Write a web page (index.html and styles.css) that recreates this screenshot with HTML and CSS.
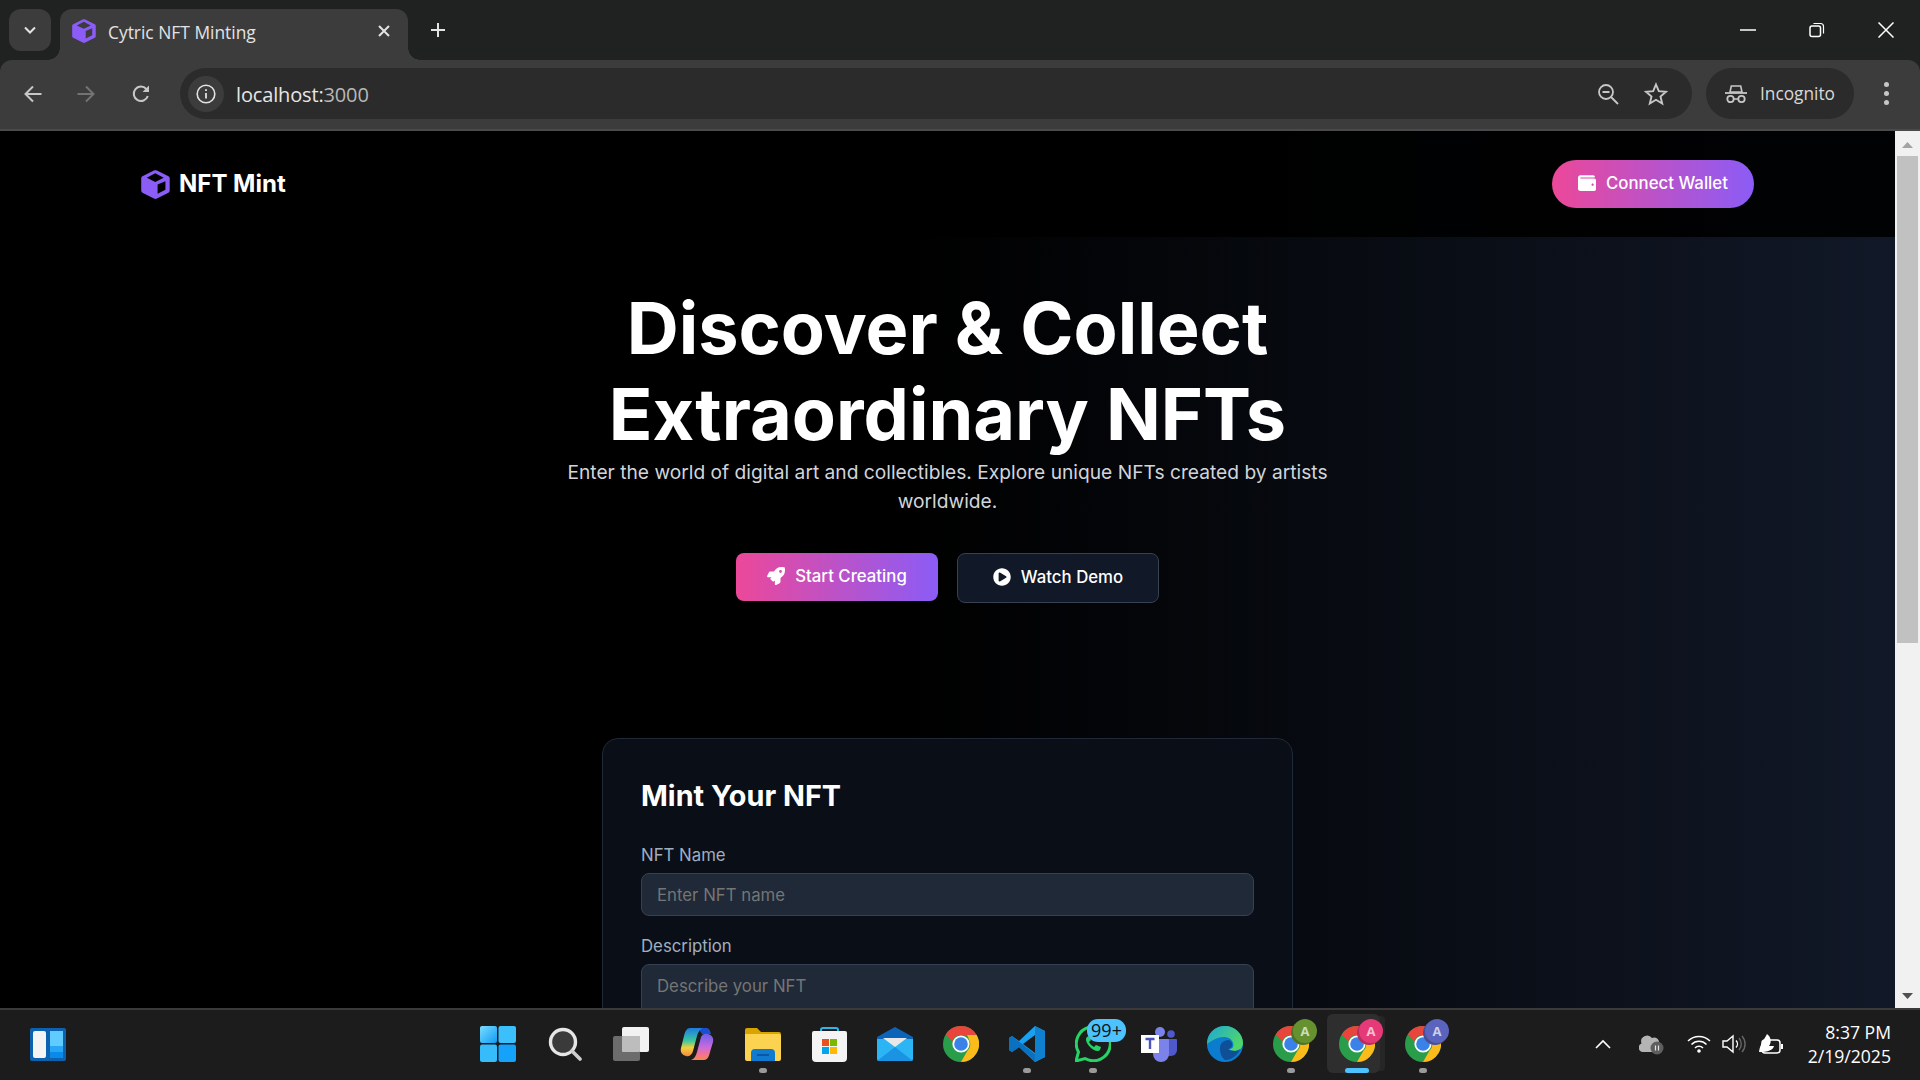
FILE: index.html
```html
<!DOCTYPE html>
<html lang="en">
<head>
<meta charset="utf-8">
<title>Cytric NFT Minting</title>
<link rel="stylesheet" href="styles.css">
</head>
<body>
<svg class="defs" aria-hidden="true">
  <defs>
    <symbol id="cube" viewBox="0 0 28.5 28.5"><path fill="#8b5cf6" fill-rule="evenodd" d="M14.2.3a2 2 0 0 1 1.500.3L27 6.200a2 2 0 0 1 1.200 1.800v12.500a2 2 0 0 1-1.200 1.800L15.700 28a3 3 0 0 1-3 0L1.400 22.300a2 2 0 0 1-1.200-1.800V8a2 2 0 0 1 1.200-1.800L12.700.6a3 3 0 0 1 1.500-.3zM5.700 7.700 14 11.700l8.300-4L14 3.300zM16.300 14.300v9l7.700-4V11z"/></symbol>
    <symbol id="chrome" viewBox="0 0 36 36">
      <circle cx="18" cy="18" r="18" fill="#2a9d4a"/>
      <path fill="#e8453c" d="M18 0a18 18 0 0 1 15.6 9H18a9 9 0 0 0-8.6 6.4L2.9 8.2A18 18 0 0 1 18 0z"/>
      <path fill="#fbbc1b" d="M33.6 9a18 18 0 0 1-15.6 27l6.6-11.6A9 9 0 0 0 25.8 13.5 9 9 0 0 0 24 9z"/>
      <circle cx="18" cy="18" r="8.6" fill="#fff"/>
      <circle cx="18" cy="18" r="6.8" fill="#3b82e8"/>
    </symbol>
  </defs>
</svg>

<header class="browser">
  <div class="tabstrip">
    <div class="tabsearch">
      <svg width="16" height="16" viewBox="0 0 16 16"><path d="M3 5.500 8 10.500l5-5" fill="none" stroke="#e3e3e3" stroke-width="2"/></svg>
    </div>
    <div class="tab">
      <svg class="tab-icon" width="24" height="24"><use href="#cube"/></svg>
      <span class="tab-title">Cytric NFT Minting</span>
      <svg class="tab-close" width="14" height="14" viewBox="0 0 14 14"><path d="M2 2l10 10M12 2 2 12" stroke="#e3e3e3" stroke-width="2"/></svg>
    </div>
    <svg class="newtab" width="16" height="16" viewBox="0 0 16 16"><path d="M8 1v14M1 8h14" stroke="#e3e3e3" stroke-width="2"/></svg>
    <div class="winctl">
      <svg width="16" height="16" viewBox="0 0 16 16"><path d="M0 8h16" stroke="#fff" stroke-width="1.500"/></svg>
      <svg width="16" height="16" viewBox="0 0 16 16"><rect x="1" y="4" width="10.500" height="10.500" rx="2" fill="none" stroke="#fff" stroke-width="1.500"/><path d="M4.500 1.500h7a3 3 0 0 1 3 3v7" fill="none" stroke="#fff" stroke-width="1.200"/></svg>
      <svg width="16" height="16" viewBox="0 0 16 16"><path d="M.5.5l15 15M15.500.5l-15 15" stroke="#fff" stroke-width="1.500"/></svg>
    </div>
  </div>
  <div class="toolbar">
    <svg class="tool-back" width="20" height="20" viewBox="0 0 20 20"><path d="M18.500 10H2.500M10 2.500 2.500 10l7.500 7.500" fill="none" stroke="#c7c7c7" stroke-width="2"/></svg>
    <svg class="tool-fwd" width="20" height="20" viewBox="0 0 20 20"><path d="M1.500 10h16M10 2.500l7.500 7.500-7.500 7.500" fill="none" stroke="#737373" stroke-width="2"/></svg>
    <svg class="tool-reload" width="20" height="20" viewBox="0 0 20 20"><path d="M16.800 12a7.200 7.200 0 1 1-1.500-7L17 7" fill="none" stroke="#c7c7c7" stroke-width="2"/><path d="M18 1.500V8h-6.500z" fill="#c7c7c7"/></svg>
    <div class="omnibox">
      <div class="siteinfo">
        <svg width="20" height="20" viewBox="0 0 20 20"><circle cx="10" cy="10" r="8.800" fill="none" stroke="#e3e3e3" stroke-width="1.600"/><path d="M10 9v5.500M10 5.300v1.800" stroke="#e3e3e3" stroke-width="1.800"/></svg>
      </div>
      <span class="url">localhost:<span class="url-dim">3000</span></span>
      <svg class="omni-zoom" width="22" height="22" viewBox="0 0 22 22"><circle cx="9" cy="9" r="7" fill="none" stroke="#c7c7c7" stroke-width="1.800"/><path d="M5.500 9h7M14 14l7 7" stroke="#c7c7c7" stroke-width="1.800"/></svg>
      <svg class="omni-star" width="24" height="24" viewBox="0 0 24 24"><path d="M12 2.500l2.800 6.700 7.200.6-5.500 4.700 1.700 7-6.200-3.700-6.200 3.700 1.700-7L2 9.800l7.200-.6z" fill="none" stroke="#c7c7c7" stroke-width="1.900"/></svg>
    </div>
    <div class="incognito">
      <svg width="22" height="20" viewBox="0 0 22 20"><path d="M5 8l1.300-6h9.400L17 8z" fill="none" stroke="#c7c7c7" stroke-width="1.600"/><path d="M0 9h22" stroke="#c7c7c7" stroke-width="1.800"/><circle cx="5.500" cy="15" r="3.200" fill="none" stroke="#c7c7c7" stroke-width="1.800"/><circle cx="16.500" cy="15" r="3.200" fill="none" stroke="#c7c7c7" stroke-width="1.800"/><path d="M8.700 15h4.600" stroke="#c7c7c7" stroke-width="1.600"/></svg>
      <span>Incognito</span>
    </div>
    <div class="kebab"><i></i><i></i><i></i></div>
  </div>
</header>

<div class="viewport">
  <main class="page">
    <nav class="nav">
      <div class="brand">
        <svg width="29" height="29"><use href="#cube"/></svg>
        <span class="brand-name">NFT Mint</span>
      </div>
      <button class="connect" type="button">
        <svg width="18" height="18" viewBox="0 0 512 512"><path fill="#fff" d="M461.2 128H80c-8.840 0-16-7.160-16-16s7.160-16 16-16h384c8.840 0 16-7.160 16-16 0-26.510-21.490-48-48-48H64C28.650 32 0 60.650 0 96v320c0 35.350 28.650 64 64 64h397.200c28.020 0 50.800-21.530 50.800-48V176c0-26.470-22.780-48-50.800-48zM416 336c-17.670 0-32-14.330-32-32s14.330-32 32-32 32 14.330 32 32-14.330 32-32 32z"/></svg>
        Connect Wallet
      </button>
    </nav>
    <section class="hero">
      <h1>Discover &amp; Collect<br>Extraordinary NFTs</h1>
      <p class="lead">Enter the world of digital art and collectibles. Explore unique NFTs created by artists worldwide.</p>
      <div class="cta">
        <button class="btn btn-primary" type="button">
          <svg width="18" height="18" viewBox="0 0 512 512"><path fill="#fff" d="M505.12 19.09c-1.190-5.530-6.660-11-12.210-12.190C460.720 0 435.510 0 410.410 0 307.180 0 245.270 55.200 199.050 128H94.840c-16.350.020-35.560 11.880-42.890 26.480L2.520 253.300A28.400 28.400 0 0 0 0 264a24 24 0 0 0 24.010 24h103.810l-22.480 22.470c-11.360 11.360-13 32.260 0 45.250l50.910 50.910c11.160 11.190 32.160 13.160 45.280 0l22.470-22.470V488a24 24 0 0 0 24.010 24 28.560 28.560 0 0 0 10.710-2.520l98.730-49.390c14.630-7.300 26.510-26.500 26.510-42.860V312.800c72.600-46.310 128.030-108.410 128.030-211.100.020-25.200.020-50.400-6.930-82.610zM384.040 168a40 40 0 1 1 40.010-40 40.020 40.020 0 0 1-40.010 40z"/></svg>
          Start Creating
        </button>
        <button class="btn btn-secondary" type="button">
          <svg width="18" height="18" viewBox="0 0 512 512"><path fill="#fff" d="M256 8C119 8 8 119 8 256s111 248 248 248 248-111 248-248S393 8 256 8zm115.700 272l-176 101c-15.800 8.800-35.700-2.500-35.700-21V152c0-18.400 19.800-29.800 35.700-21l176 107c16.400 9.200 16.400 32.900 0 42z"/></svg>
          Watch Demo
        </button>
      </div>
    </section>
    <section class="card">
      <h2>Mint Your NFT</h2>
      <label class="field-label" for="nft-name">NFT Name</label>
      <input class="field" id="nft-name" type="text" placeholder="Enter NFT name">
      <label class="field-label" for="nft-desc">Description</label>
      <textarea class="field field-area" id="nft-desc" placeholder="Describe your NFT"></textarea>
    </section>
  </main>
  <div class="scrollbar">
    <svg class="sb-arrow" width="25" height="24" viewBox="0 0 25 24"><path d="M7 17l5.500-6 5.500 6z" fill="#a3a3a3"/></svg>
    <div class="sb-track"><div class="sb-thumb"></div></div>
    <svg class="sb-arrow" width="25" height="24" viewBox="0 0 25 24"><path d="M7 9l5.500 6L18 9z" fill="#505050"/></svg>
  </div>
</div>

<footer class="taskbar">
  <div class="tb-left">
    <svg width="36" height="33" viewBox="0 0 36 33"><rect width="36" height="33" rx="2" fill="#0d62b0"/><rect x="3" y="3" width="13" height="27" rx="2" fill="#f4f4f4"/><rect x="20" y="3" width="13" height="15" fill="#5fcbff"/><rect x="20" y="18" width="13" height="6" fill="#26a6f5"/><rect x="20" y="24" width="13" height="6" fill="#0a8bea"/></svg>
  </div>
  <div class="tb-center">
    <div class="tb-item tb-start">
      <svg width="36" height="36" viewBox="0 0 36 36"><defs><linearGradient id="w1" x1="0" y1="0" x2="1" y2="1"><stop offset="0" stop-color="#7bdcff"/><stop offset="1" stop-color="#0f9cf5"/></linearGradient></defs><rect x="0" y="0" width="17" height="17" rx="2" fill="url(#w1)"/><rect x="18.500" y="0" width="17.500" height="17" rx="2" fill="#3cc0fb"/><rect x="0" y="18.500" width="17" height="17.500" rx="2" fill="#37bcfb"/><rect x="18.500" y="18.500" width="17.500" height="17.500" rx="2" fill="#14a2fa"/></svg>
    </div>
    <div class="tb-item">
      <svg width="34" height="34" viewBox="0 0 34 34"><circle cx="15" cy="15" r="12.500" fill="#3a3a3a" stroke="#e6e6e6" stroke-width="3.400"/><path d="M24 24l8 8" stroke="#cfcfcf" stroke-width="3.600" stroke-linecap="round"/></svg>
    </div>
    <div class="tb-item">
      <svg width="36" height="34" viewBox="0 0 36 34"><rect x="9" y="0" width="27" height="25" rx="2" fill="#f2f2f2"/><rect x="0" y="9" width="27" height="25" rx="2" fill="#6c6c6c"/><rect x="9" y="9" width="18" height="16" rx="1" fill="#bdbdbd"/></svg>
    </div>
    <div class="tb-item">
      <svg width="34" height="34" viewBox="0 0 34 34"><defs><linearGradient id="c1" x1="0" y1="0" x2="0" y2="1"><stop offset="0" stop-color="#1e7ae0"/><stop offset=".45" stop-color="#3cc6a0"/><stop offset=".7" stop-color="#f4d03c"/><stop offset="1" stop-color="#f08a40"/></linearGradient><linearGradient id="c2" x1="0" y1="0" x2="0" y2="1"><stop offset="0" stop-color="#6a5fe8"/><stop offset=".5" stop-color="#c86adf"/><stop offset=".8" stop-color="#f4748c"/><stop offset="1" stop-color="#f48a4c"/></linearGradient></defs><path d="M18 1h8c3 0 4 2 5 6H22z" fill="#1a4fd0"/><path d="M10 1h13c-3 1-5 4-6 8l-4 15c-1 4-4 6-7 5-4-1-6-4-5-8L4 9c1-5 3-8 6-8z" fill="url(#c1)"/><path d="M24 33H11c3-1 5-4 6-8l4-15c1-3 4-4 7-3 4 1 6 4 5 8l-3 10c-1 5-3 8-6 8z" fill="url(#c2)"/><path d="M20 13h-2l-4 11h2z" fill="#1c1c1c"/></svg>
    </div>
    <div class="tb-item tb-running">
      <svg width="36" height="33" viewBox="0 0 36 33"><path d="M0 2a2 2 0 0 1 2-2h10l4 4h18a2 2 0 0 1 2 2v5H0z" fill="#d9a400"/><path d="M0 6h34a2 2 0 0 1 2 2v23a2 2 0 0 1-2 2H2a2 2 0 0 1-2-2z" fill="#fbd350"/><path d="M6 33v-8a4 4 0 0 1 4-4h16a4 4 0 0 1 4 4v8z" fill="#0f7ad0"/><path d="M12 27h12" stroke="#0a4f96" stroke-width="1.600"/></svg>
    </div>
    <div class="tb-item">
      <svg width="35" height="35" viewBox="0 0 35 35"><path d="M9 4V3a2 2 0 0 1 2-2h13a2 2 0 0 1 2 2v1" fill="none" stroke="#2fb4ea" stroke-width="2"/><path d="M0 6a2 2 0 0 1 2-2h31a2 2 0 0 1 2 2v25a4 4 0 0 1-4 4H4a4 4 0 0 1-4-4z" fill="#f4f4f4"/><rect x="10" y="12" width="7" height="7" fill="#e8501f"/><rect x="18" y="12" width="7" height="7" fill="#7bb800"/><rect x="10" y="20" width="7" height="7" fill="#00a4ef"/><rect x="18" y="20" width="7" height="7" fill="#ffb900"/></svg>
    </div>
    <div class="tb-item">
      <svg width="36" height="34" viewBox="0 0 36 34"><path d="M0 10 18 0l18 10v3H0z" fill="#0c64b8"/><path d="M0 12h36v20a2 2 0 0 1-2 2H2a2 2 0 0 1-2-2z" fill="#2cb5f5"/><path d="M6 11h24l-12 9z" fill="#e8e8e8"/><path d="M0 34l18-14 18 14z" fill="#1a93e2"/></svg>
    </div>
    <div class="tb-item"><svg width="36" height="36"><use href="#chrome"/></svg></div>
    <div class="tb-item tb-running">
      <svg width="36" height="36" viewBox="0 0 36 36"><path d="M26 0l10 5v26l-10 5-16-15-7 5-3-2V12l3-2 7 5z" fill="#1aa0f0"/><path d="M26 0v36l10-5V5z" fill="#0f80d0"/><path d="M26 9 14 18l12 9z" fill="#1c1c1c"/><path d="M0 12l3-2 23 18v8l-16-15-7 5-3-2z" fill="#0a70c0"/></svg>
    </div>
    <div class="tb-item tb-running">
      <svg width="36" height="36" viewBox="0 0 36 36"><path d="M1 35l2.500-9A17 17 0 1 1 10 32.500z" fill="none" stroke="#25d366" stroke-width="3"/><path d="M12 11c-2 2-1 6 3 10s8 5 10 3l1-3-5-2-2 2c-2-1-4-3-5-5l2-2-2-4z" fill="#25d366"/></svg>
      <span class="badge-count">99+</span>
    </div>
    <div class="tb-item">
      <svg width="36" height="36" viewBox="0 0 36 36"><circle cx="19" cy="6" r="5" fill="#7b83eb"/><circle cx="30" cy="8" r="3.800" fill="#5059c9"/><path d="M24 13h11a1 1 0 0 1 1 1v10a6 6 0 0 1-6 6h-6z" fill="#5059c9"/><path d="M10 13h17a1 1 0 0 1 1 1v14a8 8 0 0 1-16 0z" fill="#7b83eb"/><rect x="0" y="9" width="18" height="18" fill="#fff"/><path d="M4.500 13h9M9 13v10" stroke="#4b53bc" stroke-width="2.400"/></svg>
    </div>
    <div class="tb-item">
      <svg width="36" height="36" viewBox="0 0 36 36"><defs><linearGradient id="e1" x1="0" y1="0" x2="1" y2=".5"><stop offset="0" stop-color="#1ca7d8"/><stop offset="1" stop-color="#4fd66a"/></linearGradient></defs><circle cx="18" cy="18" r="18" fill="#0c7ccf"/><path d="M0 18C0 7 8 0 18 0c10 0 18 8 18 17 0 5-4 8-8 8-3 0-5-1-6-2 4 0 5-3 4-6-1-4-5-6-9-6-8 0-14 5-17 7z" fill="url(#e1)"/><path d="M13 22c0-5 4-8 9-8 2 1 4 3 3 6-1 2-2 3-4 3 1 1 4 2 7 2 1 0 4-1 5-2-2 6-8 11-15 11-4-3-5-8-5-12z" fill="#0f4f96"/></svg>
    </div>
    <div class="tb-item tb-running">
      <svg width="36" height="36"><use href="#chrome"/></svg>
      <span class="badge-profile badge-green">A</span>
    </div>
    <div class="tb-item tb-active">
      <div class="tb-active-bg"></div>
      <svg width="36" height="36"><use href="#chrome"/></svg>
      <span class="badge-profile badge-pink">A</span>
    </div>
    <div class="tb-item tb-running">
      <svg width="36" height="36"><use href="#chrome"/></svg>
      <span class="badge-profile badge-indigo">A</span>
    </div>
  </div>
  <div class="tray">
    <svg class="tray-chev" width="16" height="10" viewBox="0 0 16 10"><path d="M1 9l7-7 7 7" fill="none" stroke="#fff" stroke-width="1.600"/></svg>
    <svg class="tray-cloud" width="26" height="22" viewBox="0 0 26 22"><path d="M3 19a4.500 4.500 0 0 1-.5-8.500A6 6 0 0 1 13 5a5 5 0 0 1 7 5.500 4.500 4.500 0 0 1-1 8.500z" fill="#b4b4b4"/><circle cx="18" cy="15" r="6.500" fill="#5e5e5e"/><path d="M16.500 12.500v5M19.500 12.500v5" stroke="#e5e5e5" stroke-width="1.200"/></svg>
    <svg class="tray-wifi" width="24" height="18" viewBox="0 0 24 18"><path d="M1 6a15.500 15.500 0 0 1 22 0M4.500 9.500a10.500 10.500 0 0 1 15 0M8 13a5.500 5.500 0 0 1 8 0" fill="none" stroke="#fff" stroke-width="1.500"/><circle cx="12" cy="16" r="1.800" fill="#fff"/></svg>
    <svg class="tray-vol" width="24" height="20" viewBox="0 0 24 20"><path d="M1 7v6h4l6 5V2L5 7z" fill="none" stroke="#fff" stroke-width="1.400"/><path d="M14 6.500a5 5 0 0 1 0 7" fill="none" stroke="#fff" stroke-width="1.400"/><path d="M17 4a9 9 0 0 1 0 12M20 2a12 12 0 0 1 0 16" fill="none" stroke="#666" stroke-width="1.400"/></svg>
    <svg class="tray-batt" width="26" height="22" viewBox="0 0 26 22"><rect x="4" y="7" width="18" height="13" rx="3" fill="none" stroke="#fff" stroke-width="1.500"/><path d="M24 11v5" stroke="#fff" stroke-width="2"/><path d="M1 19C2 11 6 7 9 1c4 3 5 8 2 12l5 0c-1 4-6 6-15 6z" fill="#fff"/></svg>
    <div class="clock"><span>8:37 PM</span><span>2/19/2025</span></div>
  </div>
</footer>
</body>
</html>
```
FILE: styles.css
```css
* { box-sizing: border-box; }
html, body { margin: 0; padding: 0; height: 100%; overflow: hidden; background: #000; }
body { display: flex; flex-direction: column; width: 1920px; height: 1080px; font-family: Inter, "Liberation Sans", sans-serif; color: #fff; }
.defs { width: 0; height: 0; position: absolute; }
svg { display: block; flex: none; }

/* browser chrome */
.browser { flex: none; height: 131px; background: #202222; display: flex; flex-direction: column; font-family: "Open Sans", "Noto Sans", sans-serif; }
.tabstrip { height: 60px; display: flex; align-items: flex-start; padding: 9px 0 0 9px; position: relative; }
.tabsearch { width: 42px; height: 42px; border-radius: 12px; background: #3c3c3c; display: flex; align-items: center; justify-content: center; }
.tab { margin-left: 9px; width: 348px; height: 51px; background: #3c3c3c; border-radius: 12px 12px 0 0; display: flex; align-items: center; padding: 0 17px 8px 12px; position: relative; }
.tab::before, .tab::after { content: ""; position: absolute; bottom: 0; width: 12px; height: 12px; }
.tab::before { left: -12px; background: radial-gradient(circle at 0 0, #202222 11.5px, #3c3c3c 12px); }
.tab::after { right: -12px; background: radial-gradient(circle at 100% 0, #202222 11.5px, #3c3c3c 12px); }
.tab-title { flex: 1; margin: 2px 0 0 12px; font-size: 17.4px; color: #e3e3e3; white-space: nowrap; }
.newtab { margin: 13px 0 0 22px; }
.winctl { margin-left: auto; display: flex; gap: 53px; padding: 13px 26px 0 0; }
.toolbar { flex: 1; background: #3c3c3c; border-radius: 12px 12px 0 0; display: flex; align-items: center; padding: 0 12px 2px 23px; border-bottom: 2px solid #4a4a4a; height: 71px; }
.tool-fwd { margin-left: 33px; }
.tool-reload { margin-left: 35px; }
.omnibox { margin-left: 29px; width: 1512px; height: 51px; border-radius: 26px; background: #2b2b2b; display: flex; align-items: center; padding-left: 8px; }
.siteinfo { width: 36px; height: 36px; border-radius: 50%; background: #3c3c3c; display: flex; align-items: center; justify-content: center; }
.url { margin: 1px 0 0 12px; font-size: 20px; color: #e6e6e6; letter-spacing: -.15px; }
.url-dim { color: #b8b8b8; }
.omni-zoom { margin-left: auto; }
.omni-star { margin-left: 25px; margin-right: 24px; }
.incognito { margin-left: 14px; width: 148px; height: 51px; border-radius: 26px; background: #2b2b2b; display: flex; align-items: center; gap: 13px; padding-left: 19px; font-size: 17.3px; color: #d8d8d8; }
.kebab { margin-left: 30px; display: flex; flex-direction: column; gap: 4px; }
.kebab i { display: block; width: 5px; height: 5px; border-radius: 50%; background: #c7c7c7; }

/* page */
.viewport { flex: none; height: 877px; display: flex; overflow: hidden; }
.page { flex: 1; min-width: 0; height: 1500px; background: linear-gradient(90deg, #000 0%, #000 48%, #111827 100%); }
.nav { height: 106px; background: rgba(0,0,0,.9); display: flex; align-items: center; justify-content: space-between; padding: 0 141px; }
.brand { display: flex; align-items: center; gap: 9px; font-size: 24px; font-weight: 700; }
.brand-name { margin-bottom: 2px; }
.connect { display: flex; align-items: center; gap: 10px; height: 48px; width: 202px; justify-content: center; border: 0; border-radius: 24px; padding: 0 0 2px; color: #fff; font: 500 16.8px Inter, sans-serif; background: linear-gradient(90deg, #ec4899, #8b5cf6); }
.hero { padding-top: 48px; display: flex; flex-direction: column; align-items: center; text-align: center; }
h1 { margin: 0; font-size: 72px; line-height: 86.4px; font-weight: 700; }
.lead { margin: 0; width: 768px; font-size: 19.2px; line-height: 28.8px; color: #d1d5db; }
.cta { display: flex; gap: 19px; align-items: flex-start; margin-top: 37.6px; }
.btn { width: 202px; display: flex; align-items: center; justify-content: center; gap: 10px; border-radius: 8px; padding: 0 0 2px; color: #fff; font: 500 16.8px Inter, sans-serif; }
.btn-primary { height: 48px; border: 0; background: linear-gradient(90deg, #ec4899, #8b5cf6); }
.btn-secondary { height: 50px; border: 1px solid #374151; background: #111827; }
.card { width: 691px; margin: 135px auto 0; padding: 38px; background: #0a0e17; border: 1px solid #1f2937; border-radius: 16px; }
h2 { margin: 0 0 28px; font-size: 28.8px; line-height: 38px; font-weight: 700; }
.field-label { display: block; font-size: 16.8px; line-height: 24px; color: #a0aec0; margin-bottom: 6px; }
.field { display: block; width: 100%; height: 43px; padding: 0 15px; margin-bottom: 18px; border: 1px solid #374151; border-radius: 8px; background: #1f2937; color: #fff; font: 16.8px Inter, sans-serif; }
.field::placeholder { color: #757575; opacity: 1; }
.field-area { height: 120px; padding-top: 11px; resize: none; }

/* scrollbar */
.scrollbar { flex: none; width: 25px; background: #f1f1f1; display: flex; flex-direction: column; }
.sb-track { flex: 1; padding: 1px 2px; }
.sb-thumb { height: 487px; background: #c1c1c1; }

/* taskbar */
.taskbar { flex: none; height: 72px; padding-top: 1px; background: #1c1c1c; border-top: 2px solid #3a3a3a; display: flex; align-items: flex-start; position: relative; }
.tb-left { width: 466px; height: 66px; padding-left: 30px; display: flex; align-items: center; }
.tb-center { display: flex; }
.tb-item { width: 66px; height: 66px; display: flex; align-items: center; justify-content: center; position: relative; }
.tb-start { padding-right: 3px; }
.tb-running::after { content: ""; position: absolute; left: 29px; bottom: 4px; width: 8px; height: 5px; border-radius: 3px; background: #9a9a9a; }
.tb-active-bg { position: absolute; left: 3px; top: 3px; width: 53px; height: 59px; border-radius: 6px; background: #2e2e2e; box-shadow: 7px 0 0 -2px #262626; }
.tb-active svg { position: relative; }
.tb-active::after { content: ""; position: absolute; left: 21px; bottom: 4px; width: 24px; height: 5px; border-radius: 3px; background: #4cc2ff; }
.badge-count { position: absolute; left: 27px; top: 8px; width: 39px; height: 23px; border-radius: 11px; background: #4cc2ff; color: #111; font: 18px/23px "Open Sans", sans-serif; text-align: center; }
.badge-profile { position: absolute; left: 35px; top: 8px; width: 24px; height: 24px; border-radius: 50%; color: rgba(255,255,255,.7); font: 700 13px/24px "Open Sans", sans-serif; text-align: center; }
.badge-green { background: #65912f; box-shadow: -2px 2px 0 #4f7424; }
.badge-pink { background: #e63a78; box-shadow: -2px 2px 0 #b52e60; }
.badge-indigo { background: #5a64bc; box-shadow: -2px 2px 0 #474f96; }
.tray { position: absolute; left: 0; right: 0; top: 1px; height: 66px; pointer-events: none; display: flex; align-items: center; padding-left: 1595px; }
.tray-cloud { margin-left: 28px; }
.tray-wifi { margin-left: 22px; }
.tray-vol { margin-left: 11px; }
.tray-batt { margin-left: 12px; }
.clock { margin-left: auto; padding-right: 29px; display: flex; flex-direction: column; align-items: flex-end; font: 17.6px/24px "Open Sans", sans-serif; color: #fff; }
```
